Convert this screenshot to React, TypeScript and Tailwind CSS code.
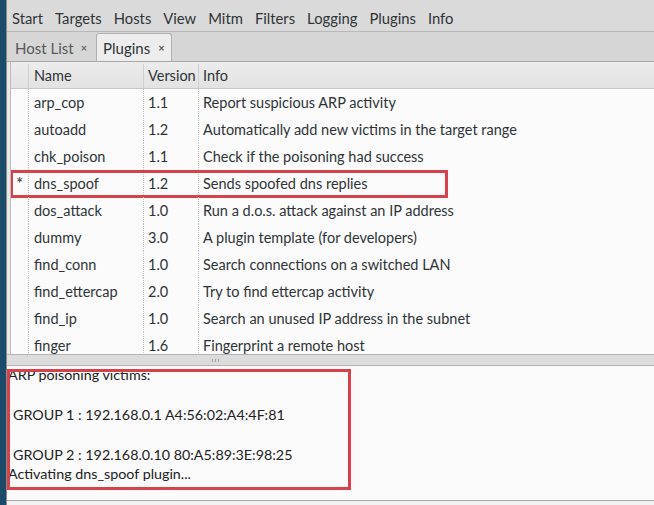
import React from "react";

const menu = ["Start", "Targets", "Hosts", "View", "Mitm", "Filters", "Logging", "Plugins", "Info"];

const rows: [string, string, string, string][] = [
  ["", "arp_cop", "1.1", "Report suspicious ARP activity"],
  ["", "autoadd", "1.2", "Automatically add new victims in the target range"],
  ["", "chk_poison", "1.1", "Check if the poisoning had success"],
  ["*", "dns_spoof", "1.2", "Sends spoofed dns replies"],
  ["", "dos_attack", "1.0", "Run a d.o.s. attack against an IP address"],
  ["", "dummy", "3.0", "A plugin template (for developers)"],
  ["", "find_conn", "1.0", "Search connections on a switched LAN"],
  ["", "find_ettercap", "2.0", "Try to find ettercap activity"],
  ["", "find_ip", "1.0", "Search an unused IP address in the subnet"],
  ["", "finger", "1.6", "Fingerprint a remote host"],
];

const font = { fontFamily: "Lato, 'Noto Sans', sans-serif" };

export default function App() {
  return (
    <div
      className="flex h-[505px] w-[654px] overflow-hidden bg-[#d9d9d9] text-[#2e3436]"
      style={font}
    >
      <div className="w-[6px] shrink-0 bg-[#1c4a69]" />
      <div className="flex min-w-0 flex-1 flex-col border-l border-[#8c8c8c]">
        {/* menubar */}
        <div className="flex h-[32px] shrink-0 items-center gap-[12px] border-b border-[#b8b8b8] bg-[#dadada] pl-[5px] pt-[6px] text-[14.8px]">
          {menu.map((m) => (
            <span key={m}>{m}</span>
          ))}
        </div>
        {/* tabs */}
        <div className="flex h-[30px] shrink-0 items-end border-b border-[#a8a8a8] bg-[#d6d6d6] pl-[1px] text-[15px]">
          <div className="flex h-[28px] items-center gap-[7px] px-[7px] pt-[2px] text-[#55595a]">
            <span>Host List</span>
            <span className="text-[11px] font-bold text-[#666]">×</span>
          </div>
          <div className="ml-[2px] flex h-[28px] items-center gap-[8px] rounded-t-[3px] border border-b-0 border-[#b0b0b0] bg-[#ededed] px-[6px] pt-[2px]">
            <span>Plugins</span>
            <span className="text-[11px] font-bold text-[#555]">×</span>
          </div>
        </div>
        {/* tree */}
        <div className="flex h-[292px] shrink-0 flex-col overflow-hidden bg-[#e8e8e8] pl-[3px]">
          <div className="flex flex-1 flex-col overflow-hidden border-l border-[#bdbdbd] bg-[#fbfbfb] text-[14.5px]">
            <div className="flex h-[27px] shrink-0 items-center border-b border-[#c8c8c8] bg-gradient-to-b from-[#ececec] to-[#e2e2e2] pt-[2px]">
              <div className="h-full w-[18px] border-r border-[#cfcfcf]" />
              <div className="flex h-full w-[115px] items-center border-r border-[#cfcfcf] pl-[5px]">Name</div>
              <div className="flex h-full w-[55px] items-center border-r border-[#cfcfcf] pl-[4px]">Version</div>
              <div className="flex h-full flex-1 items-center pl-[4px]">Info</div>
            </div>
            {rows.map(([s, n, v, i]) => (
              <div key={n} className="relative flex h-[27px] shrink-0 items-center">
                <div className="flex h-full w-[18px] items-center justify-center border-r border-dotted border-[#c6c6c6] pt-[1px] text-[17px] text-[#333]">
                  {s}
                </div>
                <div className="flex h-full w-[115px] items-center border-r border-dotted border-[#c6c6c6] pl-[5px] pt-[1px]">{n}</div>
                <div className="flex h-full w-[55px] items-center border-r border-dotted border-[#c6c6c6] pl-[4px] pt-[1px]">{v}</div>
                <div className="flex h-full flex-1 items-center whitespace-nowrap pl-[4px] pt-[1px]">{i}</div>
                {n === "dns_spoof" && (
                  <div className="pointer-events-none absolute left-[-1px] top-0 h-[28px] w-[438px] border-[3px] border-[#d8404a]" />
                )}
              </div>
            ))}
          </div>
        </div>
        {/* pane handle */}
        <div className="relative flex h-[12px] shrink-0 items-center justify-center border-y border-[#b4b4b4] bg-[#dcdcdc]">
          <div className="ml-[-230px] flex gap-[2px]">
            <span className="h-[3px] w-[1px] bg-[#a0a0a0]" />
            <span className="h-[3px] w-[1px] bg-[#a0a0a0]" />
            <span className="h-[3px] w-[1px] bg-[#a0a0a0]" />
          </div>
        </div>
        {/* log */}
        <div className="relative flex-1 overflow-hidden border-b border-[#a8a8a8] bg-[#fafafa] text-[14.3px] leading-[20px] text-[#222]">
          <div className="mt-[-1px] pl-[1px]">
            <div>ARP poisoning victims:</div>
            <div>&nbsp;</div>
            <div className="pl-[5px]">GROUP 1 : 192.168.0.1 A4:56:02:A4:4F:81</div>
            <div>&nbsp;</div>
            <div className="pl-[5px]">GROUP 2 : 192.168.0.10 80:A5:89:3E:98:25</div>
            <div className="mt-[-1px]">Activating dns_spoof plugin...</div>
          </div>
          <div className="pointer-events-none absolute left-[0px] top-[3px] h-[121px] w-[344px] border-[3px] border-[#d8404a]" />
        </div>
        <div className="h-[4px] shrink-0 bg-[#f2f2f2]" />
      </div>
    </div>
  );
}
